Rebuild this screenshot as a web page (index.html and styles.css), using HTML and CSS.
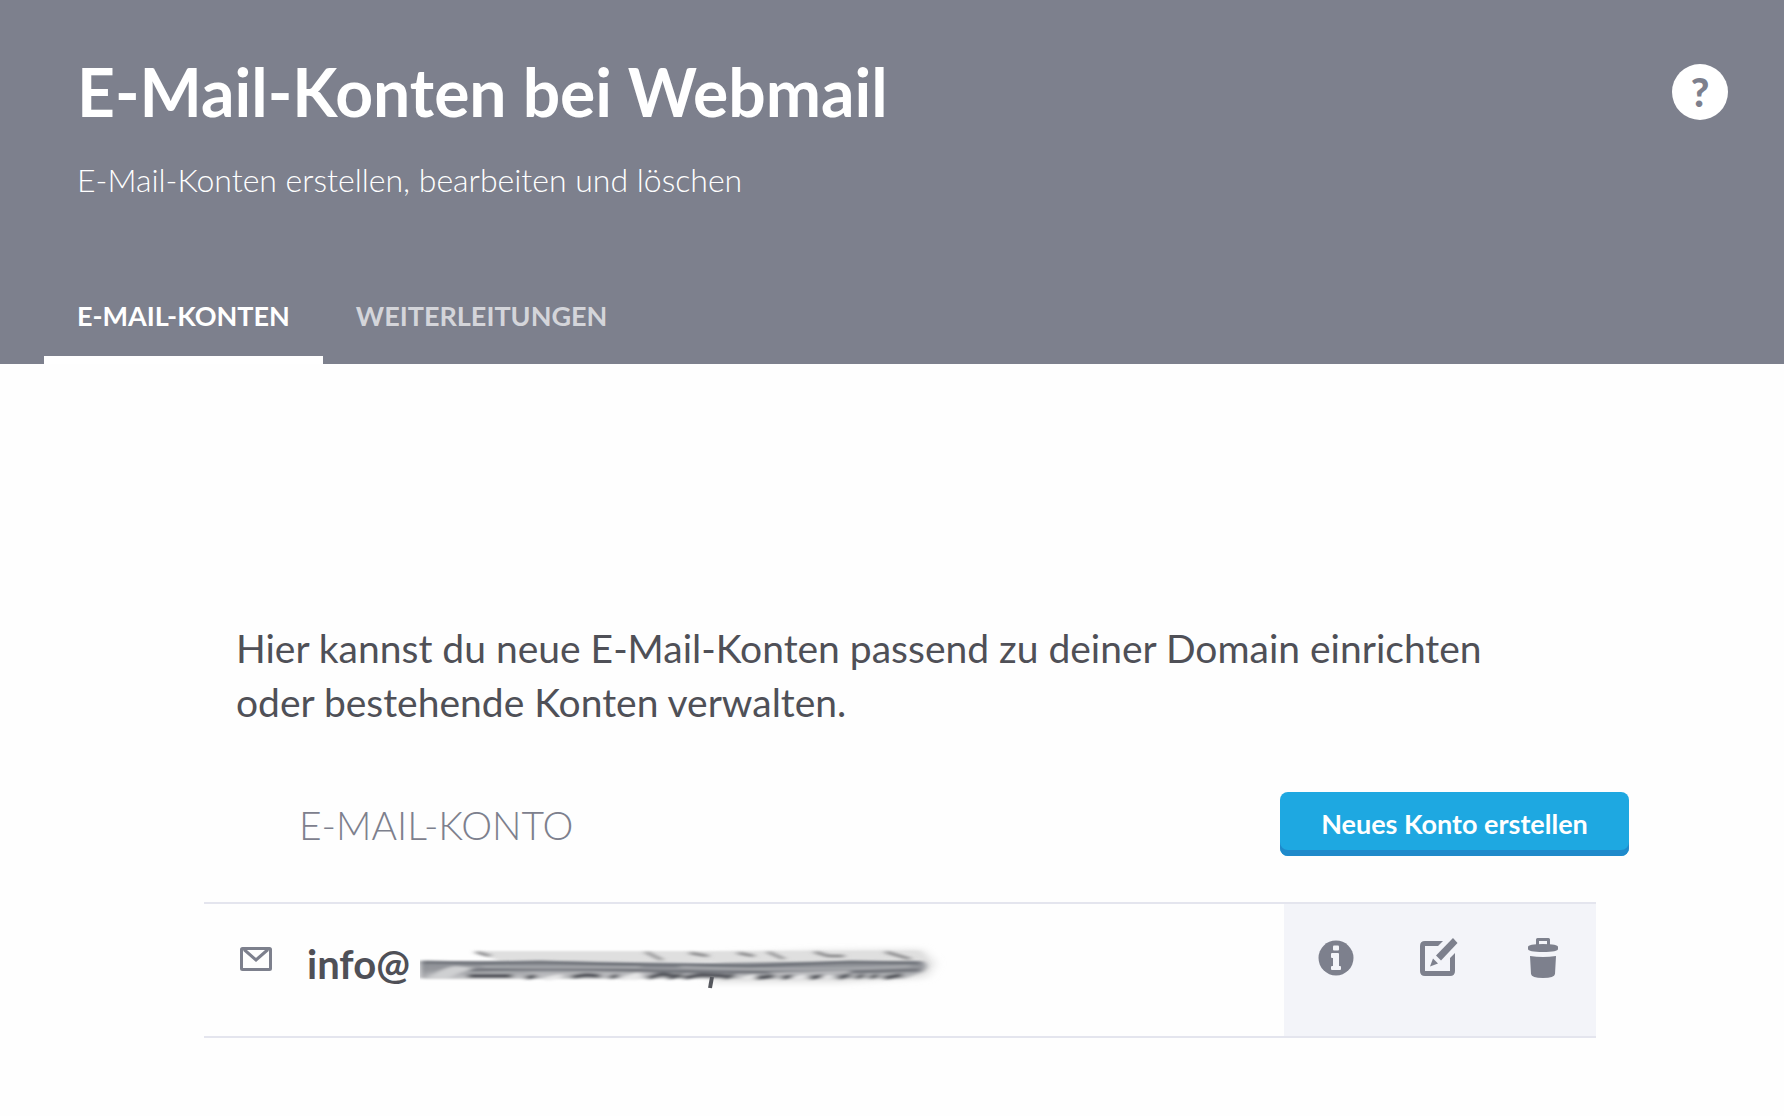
FILE: index.html
```html
<!DOCTYPE html>
<html lang="de">
<head>
    <meta charset="utf-8">
    <title>E-Mail-Konten bei Webmail</title>
    <link rel="stylesheet" href="styles.css">
</head>
<body>
    <header class="page-header">
        <div class="header-top">
            <div>
                <h1>E-Mail-Konten bei Webmail</h1>
                <p class="subtitle">E-Mail-Konten erstellen, bearbeiten und löschen</p>
            </div>
            <button type="button" class="help" aria-label="Hilfe">?</button>
        </div>
        <nav class="tabs">
            <a href="#konten" class="tab active">E-MAIL-KONTEN</a>
            <a href="#weiterleitungen" class="tab">WEITERLEITUNGEN</a>
        </nav>
    </header>

    <main class="content">
        <p class="intro">Hier kannst du neue E-Mail-Konten passend zu deiner Domain einrichten oder bestehende Konten verwalten.</p>

        <table class="accounts">
            <thead>
                <tr>
                    <td class="col-icon"></td>
                    <th scope="col">E-MAIL-KONTO</th>
                    <td class="col-actions"><button type="button" class="create">Neues Konto erstellen</button></td>
                </tr>
            </thead>
            <tbody>
                <tr>
                    <td class="col-icon">
                        <svg class="mail" width="32" height="24" viewBox="0 0 32 24">
                            <rect x="1.5" y="1.5" width="29" height="21" rx="1" fill="none" stroke="#7d808d" stroke-width="3"/>
                            <path d="M4 2.5L16 13L28 2.5" fill="none" stroke="#7d808d" stroke-width="3"/>
                        </svg>
                    </td>
                    <td>
                        <div class="address">
                            <span>info@</span>
                            <svg class="smudge" width="530" height="46" viewBox="0 0 530 46" aria-hidden="true">
                                <defs>
                                    <filter id="soft" x="-5%" y="-50%" width="110%" height="200%"><feGaussianBlur stdDeviation="3 0.8"/></filter>
                                    <filter id="haze" x="-10%" y="-50%" width="120%" height="200%"><feGaussianBlur stdDeviation="6 3"/></filter>
                                    <linearGradient id="band" x1="0" y1="0" x2="0" y2="1">
                                        <stop offset="0" stop-color="#8b8e94"/>
                                        <stop offset=".5" stop-color="#97999e"/>
                                        <stop offset="1" stop-color="#c8c9cb"/>
                                    </linearGradient>
                                </defs>
                                <path d="M300 12L400 8L502 7L514 20L506 34L420 39L290 39Z" fill="#dcdcdc" filter="url(#haze)"/>
                                <path d="M58 8H500L506 19H80Z" fill="#dfdfdf" filter="url(#soft)"/>
                                <g filter="url(#soft)">
                                    <path d="M0 18L120 18L300 20L440 18L502 18Q510 23 502 29L484 36H2Z" fill="url(#band)"/>
                                    <path d="M8 36Q16 27 34 23L58 25Q38 29 28 36Z" fill="#cfd0d2"/>
                                    <path d="M2 18V35M2 19L60 20L120 19L230 22L330 23L430 19L500 20" fill="none" stroke="#70737a" stroke-width="3"/>
                                    <path d="M50 27Q130 25 200 27T330 29Q420 30 500 27" fill="none" stroke="#72757c" stroke-width="3"/>
                                    <path d="M62 24Q150 25 220 24M260 24Q340 27 400 26T490 23" fill="none" stroke="#a9abaf" stroke-width="2"/>
                                    <path d="M110 31H230M350 31L430 29" fill="none" stroke="#b9babd" stroke-width="3"/>
                                    <path d="M125 36L142 33M202 36L220 31M212 36L222 33M322 36L336 33M372 36L386 33M400 36L412 33" fill="none" stroke="#e6e6e7" stroke-width="4"/>
                                    <path d="M48 33H92M106 35L116 33M152 34L166 32L180 33M190 35L198 32M228 35L242 31L254 33M248 35L262 32M264 35L280 32L306 33M304 35L314 32M336 35L354 33M362 35L372 33M390 35L402 33M418 35L430 32M436 35L444 32M450 35L458 32M464 35L482 32" fill="none" stroke="#54575d" stroke-width="4"/>
                                    <path d="M56 9L70 13M226 9L242 17M270 10L288 13M318 10L334 13M348 9L364 16M395 9L408 13L424 13M466 9L490 16" fill="none" stroke="#8d8d8f" stroke-width="3"/>
                                </g>
                                <path d="M292 34L290 45" stroke="#55575d" stroke-width="4"/>
                            </svg>
                        </div>
                    </td>
                    <td class="col-actions">
                        <div class="actions">
                            <button type="button" aria-label="Info">
                                <svg width="36" height="36" viewBox="0 0 36 36">
                                    <circle cx="18" cy="18" r="17.5" fill="#7d808d"/>
                                    <rect x="15" y="5.5" width="6" height="5" rx="1" fill="#f3f4f9"/>
                                    <path d="M13 14Q13 13 14 13H20Q21 13 21 14V26H22Q23 26 23 27V29Q23 30 22 30H14Q13 30 13 29V27Q13 26 14 26H15V18H14Q13 18 13 17Z" fill="#f3f4f9"/>
                                </svg>
                            </button>
                            <button type="button" aria-label="Bearbeiten">
                                <svg width="42" height="40" viewBox="0 0 42 40">
                                    <path d="M23 3H5Q0 3 0 8V33Q0 38 5 38H30Q35 38 35 33V15L30 20V33H5V8H18Z" fill="#7d808d"/>
                                    <path d="M33 0L37.5 5L21 22.5L16 17.5Z" fill="#7d808d"/>
                                    <path d="M13 20.5L18 25.5L10 28.5Z" fill="#7d808d"/>
                                </svg>
                            </button>
                            <button type="button" aria-label="Löschen">
                                <svg width="30" height="40" viewBox="0 0 30 40">
                                    <path d="M9.5 7V1.5H20.5V7" fill="none" stroke="#7d808d" stroke-width="3" stroke-linejoin="round"/>
                                    <path d="M0 9Q0 6 15 6T30 9V11Q30 14 15 14T0 11Z" fill="#7d808d"/>
                                    <path d="M2 18Q15 20 28 18L27 36Q26.5 40 15 40T3 36Z" fill="#7d808d"/>
                                </svg>
                            </button>
                        </div>
                    </td>
                </tr>
            </tbody>
        </table>
    </main>
</body>
</html>
```
FILE: styles.css
```css
* {
    box-sizing: border-box;
}

body {
    margin: 0;
    font-family: Lato, "Open Sans", sans-serif;
    color: #4f5057;
    background: #fefefe;
}

button {
    font-family: inherit;
    border: none;
    cursor: pointer;
}

svg {
    display: block;
}

.page-header {
    background: #7d808d;
    color: #fff;
}

.header-top {
    display: flex;
    justify-content: space-between;
    align-items: flex-start;
    padding: 52px 56px 0 77px;
}

h1 {
    margin: 0;
    font-size: 66px;
    line-height: 80px;
    font-weight: 700;
}

.subtitle {
    margin: 28px 0 0;
    font-size: 32px;
    line-height: 40px;
    font-weight: 300;
}

.help {
    width: 56px;
    height: 56px;
    margin-top: 12px;
    padding: 0;
    border-radius: 50%;
    background: #fff;
    color: #7d808d;
    font-size: 40px;
    line-height: 56px;
    font-weight: 900;
}

.tabs {
    display: flex;
    margin-top: 72px;
    padding-left: 44px;
}

.tab {
    padding: 24px 33px 20px;
    border-bottom: 8px solid transparent;
    font-size: 27px;
    line-height: 40px;
    font-weight: 700;
    color: #d4d5da;
    text-decoration: none;
}

.tab.active {
    color: #fff;
    border-color: #fff;
}

.content {
    padding: 257px 188px 76px 204px;
}

.intro {
    margin: 0 80px 63px 32px;
    font-size: 39px;
    line-height: 54px;
}

.accounts {
    width: 100%;
    table-layout: fixed;
    border-spacing: 0;
}

.accounts th,
.accounts td {
    padding: 0;
    vertical-align: top;
    text-align: left;
}

.accounts .col-icon {
    width: 95px;
}

.accounts .col-actions {
    width: 312px;
}

.accounts thead th {
    padding-top: 9px;
    font-size: 39px;
    line-height: 48px;
    font-weight: 300;
    color: #7d808d;
}

.accounts thead td,
.accounts thead th {
    height: 112px;
    border-bottom: 2px solid #e4e5ee;
}

.accounts tbody td {
    height: 134px;
    border-bottom: 2px solid #e4e5ee;
}

/* button sticks out over the right edge of the table */
.create {
    width: 349px;
    height: 64px;
    margin-left: -4px;
    padding: 0 0 2px;
    border-radius: 8px;
    background: #1ea8e1;
    box-shadow: inset 0 -6px 0 #1f8acb;
    color: #fff;
    font-size: 27px;
    font-weight: 700;
    white-space: nowrap;
}

.mail {
    margin: 43px 0 0 36px;
}

.address {
    display: flex;
    align-items: flex-start;
    padding: 36px 0 0 8px;
    font-size: 40px;
    line-height: 48px;
    font-weight: 700;
}

.smudge {
    flex: none;
    margin: 3px 0 0 10px;
}

.accounts tbody .col-actions {
    background: #f3f4f9;
}

.actions {
    display: flex;
    align-items: center;
    gap: 66px;
    padding: 34px 0 0 34px;
}

.actions button {
    padding: 0;
    background: none;
}
```
